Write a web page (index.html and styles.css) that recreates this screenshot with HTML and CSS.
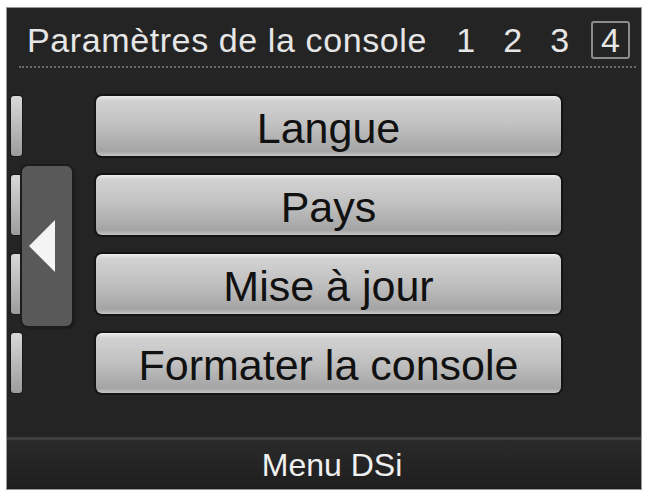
FILE: index.html
```html
<!DOCTYPE html>
<html lang="fr">
<head>
<meta charset="utf-8">
<link rel="stylesheet" href="styles.css">
</head>
<body>
<div class="screen">
  <header class="header">
    <span class="title">Paramètres de la console</span>
    <nav class="pages">
      <span class="page">1</span>
      <span class="page">2</span>
      <span class="page">3</span>
      <span class="page current">4</span>
    </nav>
  </header>
  <main class="main">
    <div class="side">
      <div class="tabs">
        <span class="tab"></span>
        <span class="tab"></span>
        <span class="tab"></span>
        <span class="tab"></span>
      </div>
      <div class="back">
        <svg width="30" height="52" viewBox="0 0 30 52"><polygon points="27,0 27,52 1,26" fill="#f4f4f4"/></svg>
      </div>
    </div>
    <div class="buttons">
      <div class="btn">Langue</div>
      <div class="btn">Pays</div>
      <div class="btn">Mise à jour</div>
      <div class="btn">Formater la console</div>
    </div>
  </main>
  <footer class="footer">Menu DSi</footer>
</div>
</body>
</html>
```
FILE: styles.css
```css
html, body {
  margin: 0;
  padding: 0;
  background: #ffffff;
}
body {
  width: 648px;
  height: 493px;
  overflow: hidden;
  font-family: "Liberation Sans", Arial, sans-serif;
}
.screen {
  margin: 8px 0 0 7px;
  width: 634px;
  height: 481px;
  background: #242424;
  display: flex;
  flex-direction: column;
  box-shadow: 0 0 0 1px #9a9a9a;
}
.header {
  height: 60px;
  margin: 0 5px 0 12px;
  border-bottom: 2px dotted #6a6a6a;
  display: flex;
  align-items: center;
  justify-content: space-between;
  box-sizing: border-box;
  padding: 6px 0 0 8px;
}
.title {
  color: #e6e6e6;
  font-size: 34px;
  letter-spacing: 0.6px;
}
.pages {
  display: flex;
  align-items: center;
  gap: 28px;
  padding-right: 6px;
}
.page {
  color: #e6e6e6;
  font-size: 34px;
}
.current {
  border: 2px solid #8c8c8c;
  border-radius: 3px;
  padding: 0 8px;
  line-height: 34px;
  margin-left: -6px;
}
.main {
  flex: 1;
  display: flex;
  padding-top: 28px;
}
.side {
  position: relative;
  width: 89px;
}
.tabs {
  display: flex;
  flex-direction: column;
  gap: 19px;
  padding-left: 4px;
}
.tab {
  display: block;
  width: 11px;
  height: 60px;
  border-radius: 3px;
  background: linear-gradient(#d8d8d8, #9c9c9c);
  box-shadow: 0 0 0 1px #1a1a1a;
}
.back {
  position: absolute;
  left: 15px;
  top: 70px;
  width: 50px;
  height: 160px;
  background: #595959;
  border-radius: 6px;
  box-shadow: 0 0 0 2px #1c1c1c, 2px 2px 3px rgba(0,0,0,0.6);
  display: flex;
  align-items: center;
  justify-content: center;
}
.back svg {
  margin-right: 8px;
}
.buttons {
  display: flex;
  flex-direction: column;
  gap: 19px;
}
.btn {
  width: 465px;
  height: 60px;
  box-sizing: border-box;
  border-radius: 6px;
  background: linear-gradient(#ececec 0%, #d2d2d2 8%, #c0c0c0 50%, #a4a4a4 92%, #c4c4c4 100%);
  box-shadow: 0 0 0 2px #141414;
  color: #111111;
  font-size: 43px;
  display: flex;
  align-items: center;
  justify-content: center;
  padding-top: 4px;
}
.footer {
  height: 52px;
  box-sizing: border-box;
  border-top: 3px solid #3e3e3e;
  background: linear-gradient(#2a2a2a, #1e1e1e);
  color: #f0f0f0;
  font-size: 32px;
  display: flex;
  align-items: center;
  justify-content: center;
  padding-left: 16px;
  padding-top: 2px;
}
```
